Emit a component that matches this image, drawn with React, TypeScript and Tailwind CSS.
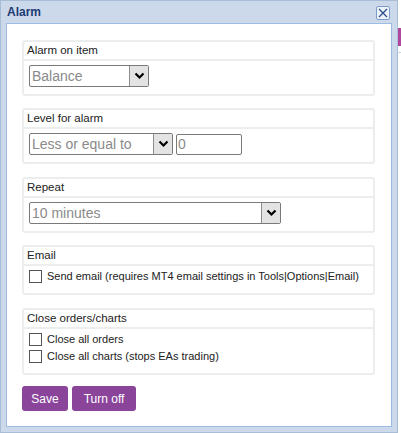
import React from "react";

const font = { fontFamily: '"Liberation Sans", Arial, sans-serif' };

function Chevron() {
  return (
    <svg width="11" height="8" viewBox="0 0 11 8">
      <path d="M1.5 1.5 L5.5 5.5 L9.5 1.5" fill="none" stroke="#000" strokeWidth="2.2" />
    </svg>
  );
}

function Select({ value, width }: { value: string; width: string }) {
  return (
    <div className={`flex h-[22px] ${width} items-stretch rounded-[2px] border border-[#7a7a7a] bg-white`}>
      <div className="flex flex-1 items-center pl-[2px] text-[14px] leading-none text-[#8a8a8a]">{value}</div>
      <div className="flex w-[19px] items-center justify-center border-l border-[#8c8c8c] bg-[#e3e3e3]">
        <Chevron />
      </div>
    </div>
  );
}

function Checkbox({ label }: { label: string }) {
  return (
    <label className="flex h-[17px] items-center gap-[5px] whitespace-nowrap">
      <span className="h-[13px] w-[13px] shrink-0 border border-[#555] bg-white" />
      <span className="text-[11px] text-[#222]">{label}</span>
    </label>
  );
}

function Section({
  title,
  height,
  children,
  content = "px-[5px] pt-[4px]",
}: {
  title: string;
  height: string;
  children: React.ReactNode;
  content?: string;
}) {
  return (
    <div className={`${height} rounded-[3px] border-2 border-[#eceeee]`}>
      <div className="flex h-[19px] items-center border-b-2 border-[#eceeee] px-[3px] text-[11.5px] text-[#222]">
        {title}
      </div>
      <div className={content}>{children}</div>
    </div>
  );
}

export default function App() {
  return (
    <div className="flex h-[433px] w-[401px] bg-white" style={font}>
      <div className="flex h-[433px] w-[398px] flex-col border border-[#a9bdd6] bg-[#ccd9ea] px-[5px] pb-[5px]">
        <div className="flex h-[22px] items-center justify-between pl-[1px] pr-[2px]">
          <span className="text-[12px] font-bold text-[#1d3b73]">Alarm</span>
          <button className="mt-[1px] flex h-[14px] w-[14px] items-center justify-center rounded-[2px] border border-[#7d9bc9] bg-[#eef3fa]">
            <svg width="10" height="10" viewBox="0 0 10 10">
              <path d="M1 1 L9 9 M9 1 L1 9" stroke="#2b4c8f" strokeWidth="1.3" />
            </svg>
          </button>
        </div>
        <div className="flex flex-1 flex-col border border-[#9ebbe3] bg-white pl-[15px] pr-[16px] pt-[16px]">
          <Section title="Alarm on item" height="h-[56px]">
            <Select value="Balance" width="w-[120px]" />
          </Section>

          <div className="mt-[12px]">
            <Section title="Level for alarm" height="h-[56px]">
              <div className="flex items-center gap-[3px]">
                <Select value="Less or equal to" width="w-[144px]" />
                <div className="flex h-[21px] w-[66px] items-center rounded-[2px] border border-[#7a7a7a] pl-[1px] text-[14px] text-[#8a8a8a]">
                  0
                </div>
              </div>
            </Section>
          </div>

          <div className="mt-[13px]">
            <Section title="Repeat" height="h-[56px]">
              <Select value="10 minutes" width="w-[252px]" />
            </Section>
          </div>

          <div className="mt-[12px]">
            <Section title="Email" height="h-[50px]" content="px-[5px] pt-[2px]">
              <Checkbox label="Send email (requires MT4 email settings in Tools|Options|Email)" />
            </Section>
          </div>

          <div className="mt-[13px]">
            <Section title="Close orders/charts" height="h-[67px]" content="px-[5px] pt-[2px]">
              <Checkbox label="Close all orders" />
              <Checkbox label="Close all charts (stops EAs trading)" />
            </Section>
          </div>

          <div className="mt-[11px] flex gap-[4px]">
            <button className="h-[25px] w-[46px] rounded-[3px] bg-[#8a459b] text-[12px] text-white">Save</button>
            <button className="h-[25px] w-[64px] rounded-[3px] bg-[#8a459b] text-[12px] text-white">Turn off</button>
          </div>
        </div>
      </div>
      <div className="flex w-[3px] flex-col">
        <div className="mt-[28px] h-[18px] bg-[#b0479f]" />
        <div className="mt-[6px] h-[1px] bg-[#c8d6e6]" />
      </div>
    </div>
  );
}
